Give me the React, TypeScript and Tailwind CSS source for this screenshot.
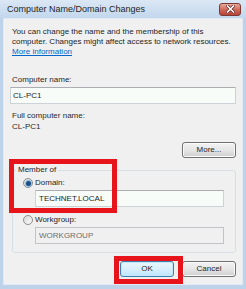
import React from "react";

const font = { fontFamily: '"Liberation Sans", Arial, sans-serif' };

const Button = ({ label, focused = false }: { label: string; focused?: boolean }) => (
  <div
    className={`w-[54px] h-[16px] rounded-[3px] border flex items-center justify-center text-[8px] leading-[10px] text-[#1e1e1e] ${
      focused
        ? "border-[#3c7fb1] bg-gradient-to-b from-[#eaf6fd] via-[#d9f0fc] to-[#bee6fd] shadow-[inset_0_0_0_1px_#c6e7f8]"
        : "border-[#707070] bg-gradient-to-b from-[#f2f2f2] via-[#e6e6e6] to-[#cfcfcf] shadow-[inset_0_0_0_1px_#fbfbfb]"
    }`}
  >
    {label}
  </div>
);

const Radio = ({ checked }: { checked?: boolean }) => (
  <span className="w-[10px] h-[10px] rounded-full border border-[#8d8d8d] bg-gradient-to-br from-[#d8d8d8] to-[#fbfbfb] flex items-center justify-center">
    {checked && (
      <span className="w-[5px] h-[5px] rounded-full bg-[#1e4f86] shadow-[0_0_0_1px_#8fbde2]"></span>
    )}
  </span>
);

export default function App() {
  return (
    <div className="w-[246px] h-[289px] bg-[#bcd3ea] flex flex-col overflow-hidden" style={font}>
      {/* title bar */}
      <div className="h-[18px] flex items-center pl-[7px] pr-[5px] bg-gradient-to-b from-[#dbe7f4] to-[#c2d7ed]">
        <span className="text-[9px] leading-[10px] text-[#1e1e1e]">Computer Name/Domain Changes</span>
        <div className="ml-auto w-[22px] h-[13px] rounded-[3px] border border-[#7a3b36] bg-gradient-to-b from-[#e9a99c] via-[#d06a5b] to-[#b8433a] flex items-center justify-center">
          <svg width="9" height="8" viewBox="0 0 9 8">
            <path d="M1.5 1 L7.5 7 M7.5 1 L1.5 7" stroke="#5a2520" strokeWidth="3" strokeLinecap="square" />
            <path d="M1.5 1 L7.5 7 M7.5 1 L1.5 7" stroke="#ffffff" strokeWidth="1.6" strokeLinecap="square" />
          </svg>
        </div>
      </div>

      {/* body */}
      <div className="relative flex-1 mx-[3px] mb-[4px] border border-[#e2ebf5] bg-[#f0f0f0] px-[6px] pt-[8px] text-[8px] leading-[10px] text-[#1e1e1e]">
        <div className="pl-[2px]">
          <div>You can change the name and the membership of this</div>
          <div>computer. Changes might affect access to network resources.</div>
          <div className="text-[#0066cc] underline">More information</div>
        </div>

        <div className="mt-[18px] pl-[2px]">Computer name:</div>
        <div className="mt-[2px] h-[17px] border border-[#cdd2d8] border-t-[#abadb3] bg-[#f7fcf9] flex items-center pl-[2px]">
          CL-PC1
        </div>

        <div className="mt-[7px] pl-[2px] text-[#2b2b2b]">Full computer name:</div>
        <div className="mt-[1px] pl-[2px] text-[#2b2b2b]">CL-PC1</div>

        <div className="mt-[10px] flex justify-end">
          <Button label="More..." />
        </div>

        <fieldset className="mt-[7px] ml-[2px] border border-[#d5dfe5] rounded-[3px] pl-[3px] pr-0 pb-[8px]">
          <legend className="px-[2px] leading-[10px]">Member of</legend>
          <div className="mt-[3px] ml-[7px] flex items-center gap-[2px] h-[10px]">
            <Radio checked />
            <span>Domain:</span>
          </div>
          <div className="mt-[2px] ml-[19px] w-[189px] h-[17px] border border-[#cdd2d8] border-t-[#abadb3] bg-[#f7fcf9] flex items-center pl-[3px]">
            TECHNET.LOCAL
          </div>
          <div className="mt-[8px] ml-[7px] flex items-center gap-[2px] h-[10px]">
            <Radio />
            <span>Workgroup:</span>
          </div>
          <div className="mt-[2px] ml-[19px] w-[189px] h-[17px] border border-[#c0c4c8] bg-[#f0f0f0] flex items-center pl-[3px] text-[#6d6d6d]">
            WORKGROUP
          </div>
        </fieldset>

        <div className="mt-[8px] flex justify-end gap-[8px]">
          <Button label="OK" focused />
          <Button label="Cancel" />
        </div>

        {/* annotation boxes */}
        <div className="absolute left-[5px] top-[140px] w-[108px] h-[54px] border-[5px] border-[#e8141c]"></div>
        <div className="absolute left-[110px] top-[237px] w-[69px] h-[28px] border-[5px] border-[#e8141c]"></div>
      </div>
    </div>
  );
}
